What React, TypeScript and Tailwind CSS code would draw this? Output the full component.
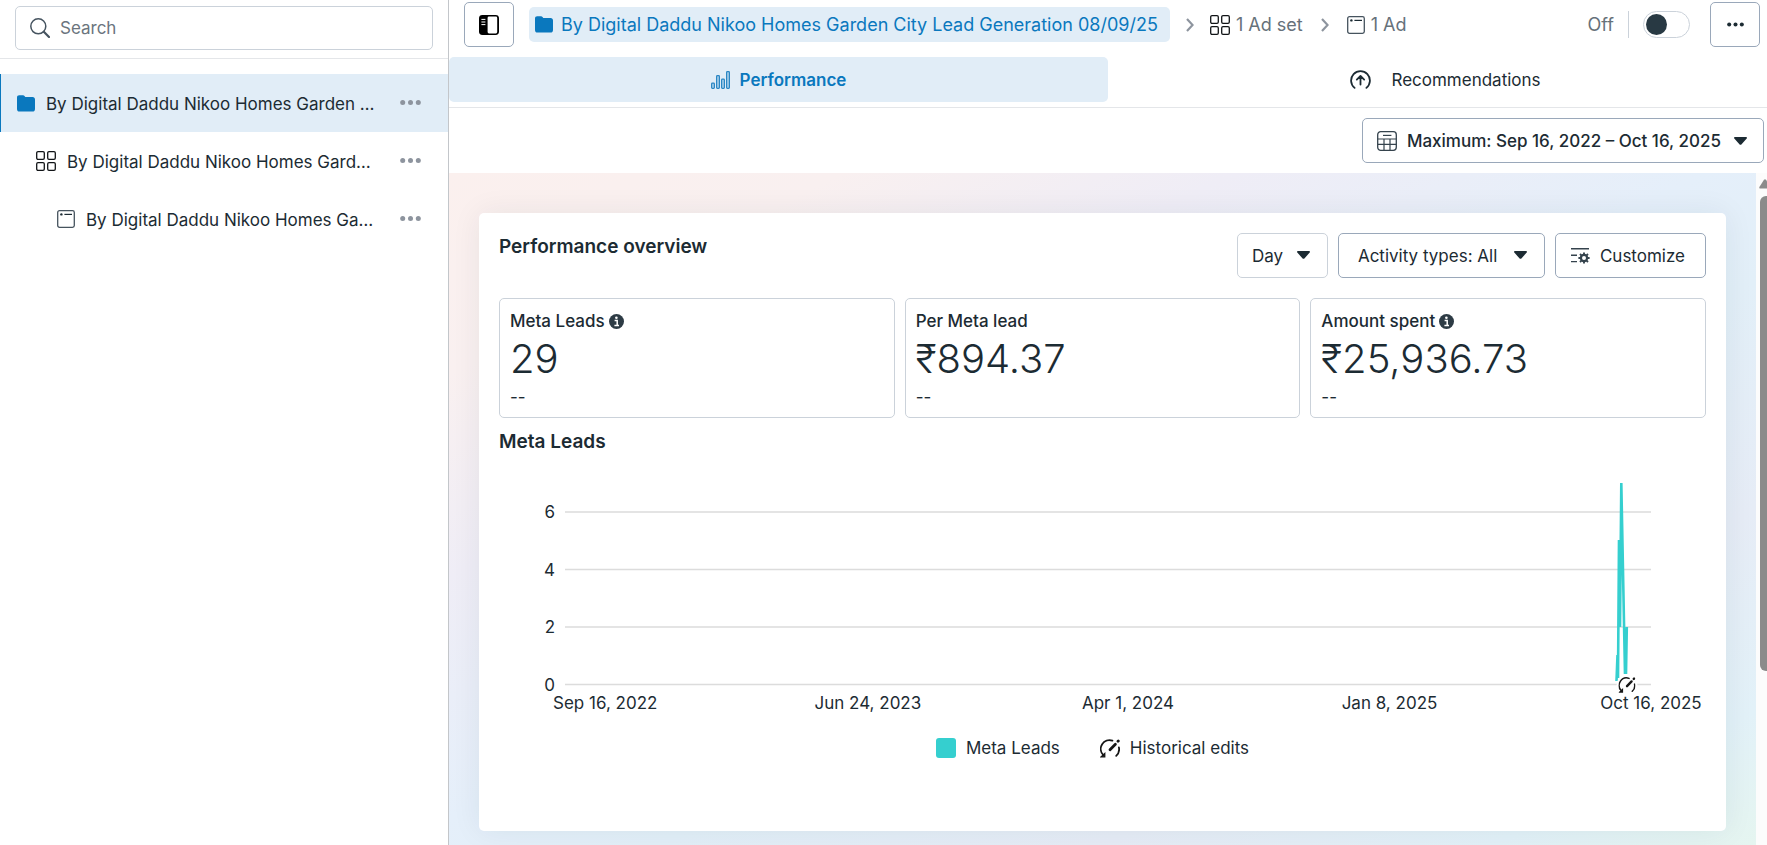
import type { ReactNode } from 'react';

const CAMPAIGN = 'By Digital Daddu Nikoo Homes Garden City Lead Generation 08/09/25';

/* ---------- Icons ---------- */

function SearchIcon() {
    return (
        <svg width="20" height="20" viewBox="0 0 20 20" fill="none" stroke="#465460" strokeWidth="1.5" className="shrink-0">
            <circle cx="8.3" cy="8.3" r="7.5" />
            <path d="M13.8 13.8 L19 19" strokeWidth="2.2" strokeLinecap="round" />
        </svg>
    );
}

function FolderIcon() {
    return (
        <svg width="18" height="17" viewBox="0 0 18 17" fill="#0a78be" className="shrink-0">
            <path d="M0 2.4 C0 1 .9 .2 2.2 .2 H6 C6.7 .2 7.1 .5 7.5 1 L8.3 2.1 H15.6 C17.1 2.1 18 3 18 4.5 V14 C18 15.7 17.1 16.6 15.5 16.6 H2.5 C.9 16.6 0 15.7 0 14 Z" />
        </svg>
    );
}

function GridIcon() {
    return (
        <svg width="20" height="20" viewBox="0 0 20 20" fill="none" stroke="#111417" strokeWidth="1.3" className="shrink-0">
            <rect x=".7" y=".7" width="7.6" height="7.6" rx="1.3" />
            <rect x="11.7" y=".7" width="7.6" height="7.6" rx="1.3" />
            <rect x=".7" y="11.7" width="7.6" height="7.6" rx="1.3" />
            <rect x="11.7" y="11.7" width="7.6" height="7.6" rx="1.3" />
        </svg>
    );
}

function AdIcon() {
    return (
        <svg width="18" height="18" viewBox="0 0 18 18" fill="none" stroke="#46535e" strokeWidth="1.3" className="shrink-0">
            <rect x=".7" y=".7" width="16.6" height="16.6" rx="1.8" />
            <circle cx="4.4" cy="4.4" r="1.2" fill="#1c2b33" stroke="none" />
            <path d="M7.4 4.4 H15" stroke="#1c2b33" strokeWidth="1.2" />
        </svg>
    );
}

function PanelIcon() {
    return (
        <svg width="20" height="20" viewBox="0 0 20 20">
            <rect width="20" height="20" rx="3.4" fill="#000" />
            <rect x="8.6" y="1.6" width="9.6" height="16.8" rx="1.4" fill="#fff" />
            <path d="M2.4 4.4 H6.4 M2.4 7 H6.4 M2.4 9.6 H6.4" stroke="#fff" strokeWidth="1" />
        </svg>
    );
}

function BarsIcon() {
    return (
        <svg width="19" height="18" viewBox="0 0 19 18" fill="#a9d0ea" stroke="#2b87c4" strokeWidth="1.2">
            <rect x=".6" y="12.1" width="2.8" height="5.3" rx=".8" />
            <rect x="5.6" y="4.6" width="2.8" height="12.8" rx=".8" />
            <rect x="10.6" y="8.1" width="2.8" height="9.3" rx=".8" />
            <rect x="15.6" y=".6" width="2.8" height="16.8" rx=".8" />
        </svg>
    );
}

function RecommendIcon() {
    return (
        <svg width="21" height="20" viewBox="0 0 21 20" fill="none" stroke="#1c2b33" strokeWidth="1.8" strokeLinecap="round" strokeLinejoin="round">
            <path d="M4.6 17.9 A9.4 9.4 0 1 1 16.4 17.9" />
            <path d="M10.5 14.6 V6.4 M6.8 9.6 L10.5 6 L14.2 9.6" />
        </svg>
    );
}

function TableIcon() {
    return (
        <svg width="20" height="20" viewBox="0 0 20 20" fill="none" stroke="#35434d" strokeWidth="1.3">
            <rect x=".7" y=".7" width="18.6" height="18.6" rx="3" />
            <path d="M.7 8 H19.3 M.7 13.4 H19.3 M7 8 V19.3 M13 8 V19.3" strokeWidth="1.2" />
            <path d="M6 4.4 H14.4" strokeWidth="1.2" />
        </svg>
    );
}

function Caret({ className }: { className?: string }) {
    return (
        <svg width="13" height="8" viewBox="0 0 13 8" fill="#1c2b33" className={className}>
            <path d="M1 0 H12 C13 0 13.3 .9 12.7 1.6 L7.6 7.2 C7 7.9 6 7.9 5.4 7.2 L.3 1.6 C-.3 .9 0 0 1 0 Z" />
        </svg>
    );
}

function ChevronIcon() {
    return (
        <svg width="8" height="14" viewBox="0 0 8 14" fill="none" stroke="#8d949e" strokeWidth="2.2" className="shrink-0">
            <path d="M1 1 L6.6 7 L1 13" />
        </svg>
    );
}

function CustomizeIcon() {
    return (
        <svg width="19" height="17" viewBox="0 0 19 17" fill="none" stroke="#35434d" strokeWidth="1.4">
            <path d="M0 1.8 H18 M0 8.2 H6 M0 14.6 H6" />
            <circle cx="13" cy="11" r="3.1" strokeWidth="2.2" />
            <path d="M13 5.4 V7.4 M13 14.6 V16.6 M7.4 11 H9.4 M16.6 11 H18.6 M9 7 L10.4 8.4 M15.6 13.6 L17 15 M17 7 L15.6 8.4 M10.4 13.6 L9 15" strokeWidth="1.9" />
        </svg>
    );
}

function InfoIcon() {
    return (
        <svg width="15" height="15" viewBox="0 0 15 15">
            <circle cx="7.5" cy="7.5" r="7.5" fill="#2d3b45" />
            <circle cx="7.4" cy="3.7" r="1.3" fill="#fff" />
            <path d="M5.6 6.4 H8.2 V11.6 M5.4 11.6 H10" stroke="#fff" strokeWidth="1.5" fill="none" />
        </svg>
    );
}

function HistoryIcon({ className }: { className?: string }) {
    return (
        <svg viewBox="0 0 20 19" fill="none" stroke="#161616" strokeWidth="1.8" strokeLinecap="round" className={className}>
            <path d="M3.2 16 A8.8 8.8 0 0 1 12.4 1.6" />
            <path d="M1.2 17.8 H4.8 V14.4 Z" fill="#161616" strokeWidth="1.2" />
            <path d="M10 10.8 L15.4 5.2" strokeWidth="2.8" />
            <path d="M18 2.2 L18.3 1.9" strokeWidth="2.8" />
            <path d="M18.9 8.4 A8.8 8.8 0 0 1 16.2 16.8" />
        </svg>
    );
}

function Dots({ className }: { className: string }) {
    return (
        <svg width="21" height="5" viewBox="0 0 21 5" className={className}>
            <circle cx="2.7" cy="2.5" r="2.5" />
            <circle cx="10.5" cy="2.5" r="2.5" />
            <circle cx="18.3" cy="2.5" r="2.5" />
        </svg>
    );
}

/* ---------- Sidebar ---------- */

function TreeRow({ icon, label, className }: { icon: ReactNode; label: string; className: string }) {
    return (
        <li className={`flex h-[58px] items-center pr-[27px] whitespace-nowrap ${className}`}>
            {icon}
            <a href="#" title={CAMPAIGN} className="grow pt-0.5">
                {label}
            </a>
            <button type="button" aria-label="More options" className="pb-0.5">
                <Dots className="fill-[#8d949e]" />
            </button>
        </li>
    );
}

function Sidebar() {
    return (
        <aside className="w-[449px] shrink-0 border-r border-[#c3c6ca]">
            <div className="border-b border-[#e4e6e9] px-[15px] pt-1.5 pb-2">
                <label className="flex h-11 items-center gap-2.5 rounded-[5px] border border-[#cbd2da] px-3.5">
                    <SearchIcon />
                    <input
                        type="text"
                        aria-label="Search"
                        placeholder="Search"
                        className="w-full bg-transparent outline-none placeholder:text-[#6b757e]"
                    />
                </label>
            </div>
            <ul className="pt-[15px]">
                <TreeRow
                    icon={<FolderIcon />}
                    label="By Digital Daddu Nikoo Homes Garden …"
                    className="gap-[11px] border-l border-[#0a78be] bg-[#e1edf7] pl-4"
                />
                <TreeRow icon={<GridIcon />} label="By Digital Daddu Nikoo Homes Gard…" className="gap-[11px] pl-9" />
                <TreeRow icon={<AdIcon />} label="By Digital Daddu Nikoo Homes Ga…" className="gap-[11px] pl-[57px]" />
            </ul>
        </aside>
    );
}

/* ---------- Header ---------- */

function Header() {
    return (
        <header className="flex items-center pt-0.5 pr-[7px] pl-[15px] text-lg text-[#66717a]">
            <button type="button" aria-label="Toggle side panel" className="flex h-[45px] w-[50px] items-center justify-center rounded-[5px] border border-[#9aa8ba]">
                <PanelIcon />
            </button>
            <nav aria-label="Breadcrumb" className="ml-[15px] flex items-center whitespace-nowrap">
                <a href="#" className="flex h-[35px] items-center gap-2 rounded-[5px] bg-[#e1edf7] pr-3 pl-1.5 text-[#0a78be]">
                    <FolderIcon />
                    {CAMPAIGN}
                </a>
                <span className="mx-4"><ChevronIcon /></span>
                <a href="#" className="flex items-center gap-1.5">
                    <GridIcon />
                    1 Ad set
                </a>
                <span className="mx-[18px]"><ChevronIcon /></span>
                <a href="#" className="flex items-center gap-1.5">
                    <AdIcon />
                    1 Ad
                </a>
            </nav>
            <label className="ml-auto flex items-center">
                Off
                <span className="mx-[14px] h-[27px] w-px bg-[#cbd2da]" />
                <input
                    type="checkbox"
                    role="switch"
                    className="flex h-[27px] w-[47px] appearance-none items-center rounded-full border border-[#cbd2da] px-0.5 before:size-[21px] before:rounded-full before:bg-[#283943] checked:justify-end"
                />
            </label>
            <button type="button" aria-label="More" className="ml-5 flex h-[45px] w-[50px] items-center justify-center rounded-[5px] border border-[#9aa8ba]">
                <Dots className="w-[17px] fill-[#1c2b33]" />
            </button>
        </header>
    );
}

function Tabs() {
    return (
        <div role="tablist" className="mt-2.5 flex border-b border-[#e4e6e9] pb-[5px]">
            <button
                type="button"
                role="tab"
                aria-selected="true"
                className="flex h-[45px] w-1/2 items-center justify-center gap-2.5 rounded-[5px] bg-[#e1edf7] font-semibold text-[#0a78be]"
            >
                <BarsIcon />
                Performance
            </button>
            <button type="button" role="tab" aria-selected="false" className="flex h-[45px] w-1/2 items-center justify-center gap-5 pl-4">
                <RecommendIcon />
                Recommendations
            </button>
        </div>
    );
}

/* ---------- Overview ---------- */

const METRICS = [
    { label: 'Meta Leads', value: '29', info: true },
    { label: 'Per Meta lead', value: '₹894.37', info: false },
    { label: 'Amount spent', value: '₹25,936.73', info: true },
];

function MetricCard({ label, value, info }: { label: string; value: string; info: boolean }) {
    return (
        <div className="rounded-[5px] border border-[#cbd2da] px-2.5 pt-2.5 pb-2">
            <div className="flex items-center gap-1 leading-6 font-medium">
                {label}
                {info && <InfoIcon />}
            </div>
            <div className="text-[40px] leading-[52px] font-light">{value}</div>
            <div className="leading-6">--</div>
        </div>
    );
}

const DATES = ['Sep 16, 2022', 'Jun 24, 2023', 'Apr 1, 2024', 'Jan 8, 2025', 'Oct 16, 2025'];

function LeadsChart() {
    return (
        <div className="mt-[26px]">
            <div className="flex pr-[55px]">
                <div className="flex h-[215px] w-14 flex-col justify-between pt-[18px] text-right leading-6">
                    <span>6</span>
                    <span>4</span>
                    <span>2</span>
                    <span>0</span>
                </div>
                <div className="relative ml-2.5 h-[203px] flex-1">
                    <svg viewBox="0 0 1086 203" preserveAspectRatio="none" className="h-full w-full overflow-visible" fill="none">
                        <path d="M0 30 H1086 M0 87.5 H1086 M0 145 H1086 M0 202.5 H1086" stroke="#dcdcdc" strokeWidth="1.3" vectorEffect="non-scaling-stroke" />
                        <path
                            d="M1051.5 199 L1052.5 173 L1053 196 L1054 58 L1055 145 L1056.3 1 L1060 192 L1061.8 145 L1061 192"
                            stroke="#35cfcf"
                            strokeWidth="2.6"
                            strokeLinejoin="bevel"
                            vectorEffect="non-scaling-stroke"
                        />
                    </svg>
                    <span className="absolute -bottom-[11px] left-[97.8%] flex size-[21px] -translate-x-1/2 items-center justify-center rounded-full bg-white">
                        <HistoryIcon className="w-[17px]" />
                    </span>
                </div>
            </div>
            <div className="-mt-1.5 mr-[3px] ml-[54px] flex justify-between leading-6">
                {DATES.map((date) => (
                    <span key={date} className="w-[104px] text-center whitespace-nowrap">
                        {date}
                    </span>
                ))}
            </div>
            <div className="mt-[21px] flex items-center justify-center gap-10 pr-5 leading-6">
                <span className="flex items-center gap-2.5">
                    <span className="size-5 rounded-[3px] bg-[#35cfcf]" />
                    Meta Leads
                </span>
                <span className="flex items-center gap-2.5">
                    <HistoryIcon className="w-5" />
                    Historical edits
                </span>
            </div>
        </div>
    );
}

function Overview() {
    return (
        <section className="rounded-[5px] bg-white px-5 pt-5 pb-[71px] shadow-[0_0_30px_rgba(20,40,60,0.07)]">
            <div className="flex items-start justify-between">
                <h2 className="text-[19px] leading-7 font-semibold">Performance overview</h2>
                <div className="flex gap-2.5">
                    <div className="relative">
                        <select aria-label="Breakdown" className="h-[45px] w-[91px] appearance-none rounded-[5px] border border-[#cbd2da] bg-white pl-3.5">
                            <option>Day</option>
                        </select>
                        <Caret className="pointer-events-none absolute top-[18px] right-[18px]" />
                    </div>
                    <div className="relative">
                        <select aria-label="Activity types" className="h-[45px] w-[207px] appearance-none rounded-[5px] border border-[#9aa8ba] bg-white pl-[19px]">
                            <option>Activity types: All</option>
                        </select>
                        <Caret className="pointer-events-none absolute top-[18px] right-[18px]" />
                    </div>
                    <button type="button" className="flex h-[45px] items-center gap-2.5 rounded-[5px] border border-[#9aa8ba] pr-5 pl-[15px]">
                        <CustomizeIcon />
                        Customize
                    </button>
                </div>
            </div>
            <div className="mt-5 grid grid-cols-3 gap-2.5">
                {METRICS.map((m) => (
                    <MetricCard key={m.label} {...m} />
                ))}
            </div>
            <h3 className="mt-2.5 text-[19px] leading-7 font-semibold">Meta Leads</h3>
            <LeadsChart />
        </section>
    );
}

export default function App() {
    return (
        <div className="flex min-h-screen bg-white font-[Inter,'Liberation_Sans',sans-serif] text-[17px] leading-6 text-[#1c2b33]">
            <Sidebar />
            <main className="flex min-w-0 flex-1 flex-col">
                <Header />
                <Tabs />
                <div className="flex justify-end py-2.5 pr-[3px]">
                    <button type="button" className="flex h-[45px] items-center rounded-[5px] border border-[#9aa8ba] pr-4 pl-3.5 font-medium">
                        <TableIcon />
                        <span className="mr-[13px] ml-2.5">Maximum: Sep 16, 2022 – Oct 16, 2025</span>
                        <Caret />
                    </button>
                </div>
                <div className="flex flex-1">
                    <div className="min-w-0 flex-1 overflow-hidden bg-[linear-gradient(to_bottom_right,#fbf0ee_0%,#f9f0f0_15%,#efedf6_30%,#e5effa_48%,#e2eff8_58%,#e6ecf6_75%,#e2f1f8_90%,#e5f5f0_100%)] px-[30px] pt-10 pb-3.5">
                        <Overview />
                    </div>
                    {/* Scroll bar */}
                    <div className="w-[11px] overflow-hidden bg-[#fcfcfc] pt-1.5 pl-[3px]">
                        <svg width="12" height="10" viewBox="0 0 12 10" fill="#8b8b8b">
                            <path d="M5 .8 Q6 -.4 7 .8 L11.6 8 Q12 9.6 10.6 9.6 H1.4 Q0 9.6 .4 8 Z" />
                        </svg>
                        <div className="mt-[7px] ml-px h-[475px] w-3 rounded-full bg-[#8b8b8b]" />
                    </div>
                </div>
            </main>
        </div>
    );
}
